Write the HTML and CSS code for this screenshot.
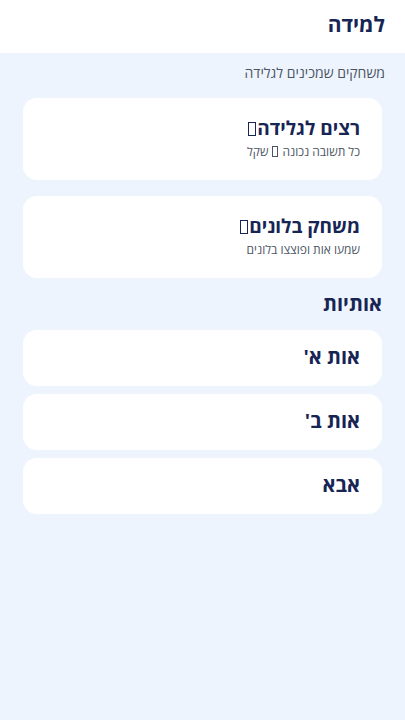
FILE: index.html
```html
<!DOCTYPE html>
<html lang="he" dir="rtl">
<head>
<meta charset="utf-8">
<meta name="viewport" content="width=device-width, initial-scale=1">
<title>למידה</title>
<link rel="stylesheet" href="styles.css">
</head>
<body>
<header class="topbar">
  <h1 class="topbar-title">למידה</h1>
</header>
<main class="content">
  <p class="intro">משחקים שמכינים לגלידה</p>
  <section class="games">
    <a class="card game-card" href="#">
      <span class="card-title">רצים לגלידה<span class="tofu" aria-hidden="true"></span></span>
      <span class="card-sub">כל תשובה נכונה<span class="tofu tofu-sm" aria-hidden="true"></span>שקל</span>
    </a>
    <a class="card game-card" href="#">
      <span class="card-title">משחק בלונים<span class="tofu" aria-hidden="true"></span></span>
      <span class="card-sub">שמעו אות ופוצצו בלונים</span>
    </a>
  </section>
  <h2 class="section-title">אותיות</h2>
  <section class="letters">
    <a class="card letter-card" href="#">אות א'</a>
    <a class="card letter-card" href="#">אות ב'</a>
    <a class="card letter-card" href="#">אבא</a>
  </section>
</main>
</body>
</html>
```
FILE: styles.css
```css
* { box-sizing: border-box; }
html, body {
  margin: 0;
  padding: 0;
}
body {
  font-family: "Open Sans", "Noto Sans", "DejaVu Sans", sans-serif;
  background: #eef4fe;
  color: #172554;
  min-height: 720px;
}
.topbar {
  background: #ffffff;
  height: 53px;
  display: flex;
  align-items: center;
  padding: 0 20px 5px;
}
.topbar-title {
  margin: 0;
  font-size: 21px;
  font-weight: 700;
  color: #172554;
}
.content {
  padding: 10px 23px 20px;
}
.intro {
  margin: 0 -3px 0 0;
  font-size: 14px;
  color: #4b5563;
  line-height: 20px;
}
.games {
  display: flex;
  flex-direction: column;
  gap: 16px;
  margin-top: 15px;
}
.card {
  display: flex;
  background: #ffffff;
  border-radius: 14px;
  text-decoration: none;
  color: #172554;
}
.game-card {
  flex-direction: column;
  height: 82px;
  padding: 16px 22px 0;
}
.card-title {
  font-size: 19px;
  font-weight: 700;
  line-height: 28px;
}
.card-sub {
  font-size: 12px;
  color: #4b5563;
  line-height: 20px;
}
.tofu {
  display: inline-block;
  width: 8px;
  height: 14px;
  border: 1.2px solid currentColor;
  margin-right: 1px;
  vertical-align: -1px;
}
.tofu-sm {
  width: 6px;
  height: 11px;
  border-width: 1px;
  margin: 0 4px;
  vertical-align: -1px;
}
.section-title {
  margin: 12px 0 0;
  font-size: 20px;
  font-weight: 700;
  line-height: 28px;
}
.letters {
  display: flex;
  flex-direction: column;
  gap: 8px;
  margin-top: 12px;
}
.letter-card {
  height: 56px;
  align-items: center;
  padding: 0 22px 4px;
  font-size: 20px;
  font-weight: 700;
}
```
